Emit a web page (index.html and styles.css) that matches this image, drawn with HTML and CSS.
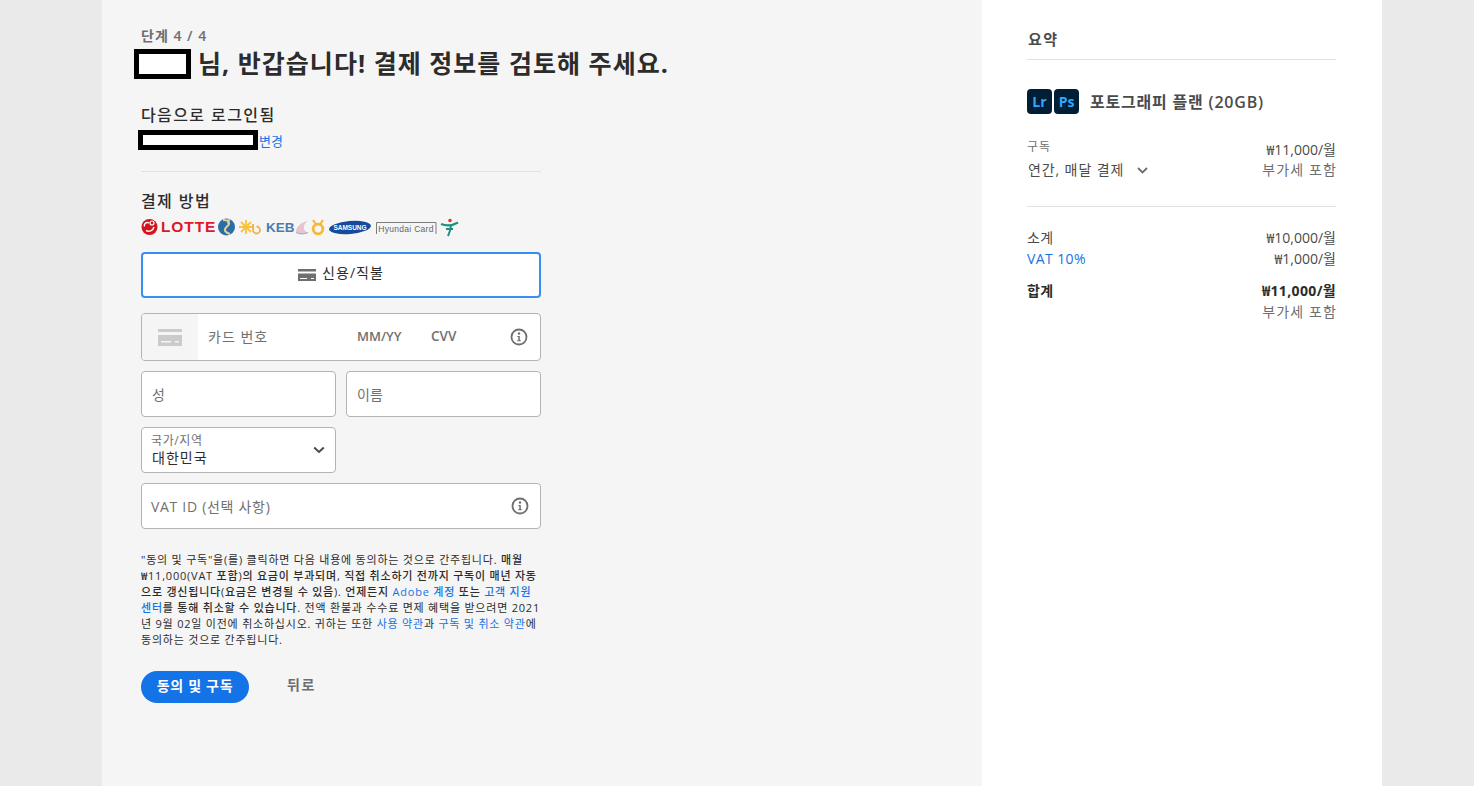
FILE: index.html
```html
<!DOCTYPE html>
<html lang="ko">
<head>
<meta charset="utf-8">
<title>결제</title>
<link rel="stylesheet" href="styles.css">
</head>
<body>
<div class="page">
  <main class="main">
    <div class="form">
      <p class="step">단계 4 / 4</p>
      <h1 class="title"><span class="mask mask-name"></span><span class="title-text">님, 반갑습니다! 결제 정보를 검토해 주세요.</span></h1>
      <h2 class="subhead login-head">다음으로 로그인됨</h2>
      <div class="login-row"><span class="mask mask-mail"></span><a class="link change">변경</a></div>
      <hr class="rule">
      <h2 class="subhead pay-head">결제 방법</h2>
      <svg class="logos" width="320" height="20" viewBox="0 0 320 20">
        <circle cx="8.500" cy="10" r="8" fill="#d2141e"/>
        <path d="M3.500 9.500a3 3 0 0 1 4.500-3.500M5 13.500c3 1.500 7 .5 8-3.500" stroke="#fff" stroke-width="1.400" fill="none"/>
        <circle cx="11" cy="6" r="2" fill="none" stroke="#fff" stroke-width="1.200"/>
        <text x="20" y="15" class="lotte">LOTTE</text>
        <circle cx="85.500" cy="10" r="8.500" fill="#2b6ea6"/>
        <path d="M82 3c6 0 8 3 4 6.500s-2 6 3 7.500M89 2.500c-2.500 1-2.500 3-1 4.500" stroke="#e3d39a" stroke-width="2" fill="none"/>
        <path d="M105 3v14M98 10h14M100 5l10 10M110 5l-10 10" stroke="#f9c33c" stroke-width="1.800"/>
        <path d="M112 7v6a3.500 3.500 0 1 0 3.500-3.500" stroke="#f2b04a" stroke-width="1.800" fill="none"/>
        <text x="125" y="15" class="keb">KEB</text>
        <path d="M167 4c-7 1-12 6-12 11 4 2 9 2 12 1-5-2-6-8 0-12z" fill="#e9c4cf"/>
        <path d="M155 15.500c3 1.500 8 1.500 12 0" stroke="#8fb3d0" stroke-width="1.300" fill="none"/>
        <circle cx="177" cy="12" r="4.800" fill="none" stroke="#f5b93a" stroke-width="2.800"/>
        <path d="M172 3l3 4.500M182 3l-3 4.500" stroke="#f5b93a" stroke-width="2.200"/>
        <ellipse cx="209" cy="10.500" rx="21" ry="6.500" fill="#164a9c" transform="rotate(-5 209 10.500)"/>
        <text x="209" y="13" class="samsung">SAMSUNG</text>
        <path d="M235.500 17V5.500h59.500V17" fill="none" stroke="#7d7d7d" stroke-width="1"/>
        <text x="265" y="15" class="hyundai">Hyundai Card</text>
        <circle cx="309" cy="3.500" r="1.800" fill="#d83a3a"/>
        <path d="M300 7c5 2 11 2 17-1.500" stroke="#1f8f7e" stroke-width="2.200" fill="none"/>
        <path d="M310 8c0 4-1 7-3 11M305 12h7" stroke="#1f8f7e" stroke-width="2" fill="none"/>
      </svg>
      <button class="method" type="button">
        <svg class="card-icon" width="18" height="14" viewBox="0 0 18 14"><path d="M0 1h18v2.500H0zM0 5.500h18V13H0z" fill="#6e6e6e"/><path d="M2 10h7v1H2zM13 10h3v1h-3z" fill="#fff"/></svg>
        <span class="method-label">신용/직불</span>
      </button>
      <div class="field card-field">
        <span class="card-slot"><svg width="24" height="17" viewBox="0 0 24 17"><path d="M0 0h24v3H0zM0 6h24v11H0z" fill="#cbcbcb"/><path d="M3 12h10v1.500H3zM17 12h4v1.500h-4z" fill="#f5f5f5"/></svg></span>
        <span class="ph card-no">카드 번호</span>
        <span class="ph mm">MM/YY</span>
        <span class="ph cvv">CVV</span>
        <svg class="info" width="18" height="18" viewBox="0 0 18 18"><circle cx="9" cy="9" r="7.500" fill="none" stroke="#6e6e6e" stroke-width="1.800"/><circle cx="9" cy="5.500" r="1.200" fill="#6e6e6e"/><path d="M7.300 8h2.500v4.300h1v1H7.300v-1h1V9h-1z" fill="#6e6e6e"/></svg>
      </div>
      <div class="two">
        <div class="field name-field"><span class="ph">성</span></div>
        <div class="field name-field"><span class="ph">이름</span></div>
      </div>
      <div class="two">
        <div class="field country">
          <div class="country-text"><span class="country-label">국가/지역</span><span class="country-value">대한민국</span></div>
          <svg class="chev" width="12" height="8" viewBox="0 0 12 8"><path d="M1.200 1.500 6 6l4.800-4.500" fill="none" stroke="#4b4b4b" stroke-width="2"/></svg>
        </div>
      </div>
      <div class="field vat">
        <span class="ph vat-text">VAT ID (선택 사항)</span>
        <svg class="info" width="18" height="18" viewBox="0 0 18 18"><circle cx="9" cy="9" r="7.500" fill="none" stroke="#6e6e6e" stroke-width="1.800"/><circle cx="9" cy="5.500" r="1.200" fill="#6e6e6e"/><path d="M7.300 8h2.500v4.300h1v1H7.300v-1h1V9h-1z" fill="#6e6e6e"/></svg>
      </div>
      <p class="legal">"동의 및 구독"을(를) 클릭하면 다음 내용에 동의하는 것으로 간주됩니다. <b>매월<br>₩11,000(VAT 포함)의 요금이 부과되며, 직접 취소하기 전까지 구독이 매년 자동<br>으로 갱신됩니다(요금은 변경될 수 있음). 언제든지 <a class="link">Adobe 계정</a> 또는 <a class="link">고객 지원<br>센터</a>를 통해 취소할 수 있습니다.</b> 전액 환불과 수수료 면제 혜택을 받으려면 2021<br>년 9월 02일 이전에 취소하십시오. 귀하는 또한 <a class="link">사용 약관</a>과 <a class="link">구독 및 취소 약관</a>에<br>동의하는 것으로 간주됩니다.</p>
      <div class="actions">
        <button class="primary" type="button">동의 및 구독</button>
        <button class="back" type="button">뒤로</button>
      </div>
    </div>
  </main>
  <aside class="side">
    <h2 class="side-title">요약</h2>
    <div class="product">
      <span class="app">Lr</span><span class="app">Ps</span>
      <span class="product-name">포토그래피 플랜 (20GB)</span>
    </div>
    <div class="sub-row">
      <div class="sub-left">
        <span class="sub-label">구독</span>
        <span class="sub-plan">연간, 매달 결제<svg class="plan-chev" width="11" height="7" viewBox="0 0 11 7"><path d="M1 1l4.500 4.500L10 1" fill="none" stroke="#6e6e6e" stroke-width="1.800"/></svg></span>
      </div>
      <div class="sub-right">
        <span class="price">₩11,000/월</span>
        <span class="muted">부가세 포함</span>
      </div>
    </div>
    <hr class="side-rule">
    <div class="line"><span class="line-label">소계</span><span class="price">₩10,000/월</span></div>
    <div class="line"><a class="link line-label">VAT 10%</a><span class="price">₩1,000/월</span></div>
    <div class="line total"><b class="line-label">합계</b><b class="total-price">₩11,000/월</b></div>
    <div class="incl"><span class="muted">부가세 포함</span></div>
  </aside>
</div>
</body>
</html>
```
FILE: styles.css
```css
* { box-sizing: border-box; }
html, body { margin: 0; height: 100%; }
body {
  background: #eaeaea;
  color: #2c2c2c;
  font-family: "Open Sans", "Noto Sans CJK KR", sans-serif;
  overflow: hidden;
}
.page { display: flex; width: 1280px; height: 786px; margin-left: 102px; }
.main { width: 880px; background: #f5f5f5; padding: 27px 0 0 39px; }
.form { width: 400px; }
.side { width: 400px; background: #fff; padding: 28px 46px 0 45px; }
.step { margin: 0; font-size: 14px; line-height: 18px; font-weight: 600; color: #6e6e6e; letter-spacing: 1px; }
.title { display: flex; align-items: center; margin: 4px 0 0 -7px; gap: 7px; height: 30px; width: 640px; font-size: 25px; line-height: 30px; font-weight: 700; color: #2c2c2c; letter-spacing: 1.04px; }
.title-text { display: block; flex: none; padding-bottom: 2px; }
.mask { display: block; border: 5px solid #000; background: #fff; flex: none; }
.mask-name { width: 57px; height: 30px; }
.mask-mail { width: 120px; height: 20px; margin-left: -3px; }
.subhead { margin: 0; font-size: 16px; line-height: 22px; font-weight: 500; color: #2c2c2c; letter-spacing: 1.4px; }
.login-head { margin-top: 25px; }
.login-row { display: flex; align-items: center; height: 20px; margin-top: 4px; font-size: 13px; }
.change { margin-left: 1px; }
.link { color: #1473e6; }
.rule { height: 1px; border: 0; margin: 21px 0 0; background: #e1e1e1; }
.pay-head { margin-top: 18px; }
.logos { display: block; margin-top: 5px; }
.lotte { font: 700 15.500px "Liberation Sans", sans-serif; fill: #e0162b; letter-spacing: .9px; }
.keb { font: 700 13.500px "Liberation Sans", sans-serif; fill: #4d7bb0; }
.samsung { font: 700 6.500px "Liberation Sans", sans-serif; fill: #fff; text-anchor: middle; }
.hyundai { font: 400 8.500px "Liberation Sans", sans-serif; fill: #666; text-anchor: middle; letter-spacing: .3px; }
.method { display: flex; align-items: center; justify-content: center; gap: 6px; width: 100%; height: 46px; margin-top: 15px; background: #fff; border: 2px solid #378ef0; border-radius: 4px; font: 400 14px "Open Sans", "Noto Sans CJK KR", sans-serif; color: #2c2c2c; padding: 0; }
.method-label { display: block; margin-top: -6px; letter-spacing: 1.1px; }
.card-icon { display: block; }
.field { display: flex; align-items: center; background: #fff; border: 1px solid #b3b3b3; border-radius: 4px; }
.ph { font-size: 14px; color: #707070; }
.card-field { height: 48px; margin-top: 15px; overflow: hidden; }
.card-slot { display: flex; align-items: center; justify-content: center; align-self: stretch; width: 56px; background: #f5f5f5; }
.card-no { width: 149px; margin: -2px 0 0 10px; letter-spacing: 1px; }
.mm { width: 74px; margin-top: -2px; font-size: 13px; font-weight: 600; }
.cvv { width: 79px; margin-top: -2px; font-weight: 600; font-size: 13.500px; }
.info { display: block; flex: none; }
.two { display: flex; gap: 10px; margin-top: 10px; }
.name-field { width: 195px; height: 46px; padding-left: 10px; }
.country { width: 195px; height: 46px; padding: 0 10px; justify-content: space-between; }
.country-text { display: flex; flex-direction: column; }
.country-label { margin-left: -1px; font-size: 12px; line-height: 14px; color: #707070; letter-spacing: .6px; }
.country-value { font-size: 14px; line-height: 19px; color: #2c2c2c; letter-spacing: 1px; }
.vat { height: 46px; margin-top: 10px; padding: 0 11px 0 9px; justify-content: space-between; }
.vat-text { letter-spacing: .7px; }
.legal { margin: 23px 0 0; font-size: 11px; line-height: 16px; color: #2c2c2c; letter-spacing: .78px; white-space: nowrap; }
.legal b { font-weight: 500; }
.actions { display: flex; align-items: center; gap: 24px; margin-top: 23px; }
.primary { width: 108px; height: 32px; border: 0; border-radius: 16px; background: #1473e6; color: #fff; font: 700 14px "Open Sans", "Noto Sans CJK KR", sans-serif; letter-spacing: .7px; padding: 0 0 4px; }
.back { border: 0; background: none; padding: 0 0 7px 1px; width: 56px; font: 700 14px "Open Sans", "Noto Sans CJK KR", sans-serif; letter-spacing: 1.5px; color: #6e6e6e; }
.side-title { margin: 0; padding-bottom: 8px; border-bottom: 1px solid #e1e1e1; font-size: 15px; line-height: 23px; font-weight: 700; color: #4b4b4b; letter-spacing: 1.5px; text-indent: 1px; }
.product { display: flex; align-items: center; gap: 2px; height: 26px; margin-top: 28px; }
.app { display: flex; align-items: center; justify-content: center; width: 25px; height: 25px; border-radius: 4px; background: #001e36; color: #31a8ff; font-size: 14px; font-weight: 700; }
.product-name { margin-left: 9px; padding-bottom: 1px; font-size: 16px; font-weight: 600; color: #4b4b4b; letter-spacing: .8px; }
.sub-row { display: flex; justify-content: space-between; margin-top: 23px; }
.sub-left, .sub-right { display: flex; flex-direction: column; font-size: 14px; }
.sub-label { margin-bottom: 2px; font-size: 12px; line-height: 20px; color: #707070; letter-spacing: 1px; }
.sub-plan { display: flex; align-items: center; margin-left: 1px; line-height: 22px; color: #4b4b4b; letter-spacing: .9px; }
.plan-chev { display: block; margin-left: 13px; }
.sub-right { align-items: flex-end; padding-top: 3px; }
.price { line-height: 20px; color: #4b4b4b; }
.line .price { line-height: 22px; }
.muted { font-size: 14px; line-height: 20px; color: #707070; letter-spacing: 1.1px; margin-right: -1px; }
.side-rule { height: 1px; border: 0; margin: 25px 0 0; background: #e1e1e1; }
.line { display: flex; justify-content: space-between; height: 21px; font-size: 14px; line-height: 21px; color: #4b4b4b; }
.line-label { letter-spacing: .4px; }
.side-rule + .line { margin-top: 20px; }
.total { margin-top: 11px; color: #2c2c2c; }
.total b { font-weight: 700; }
.total-price { letter-spacing: .35px; }
.incl { display: flex; justify-content: flex-end; margin-top: 1px; }
```
